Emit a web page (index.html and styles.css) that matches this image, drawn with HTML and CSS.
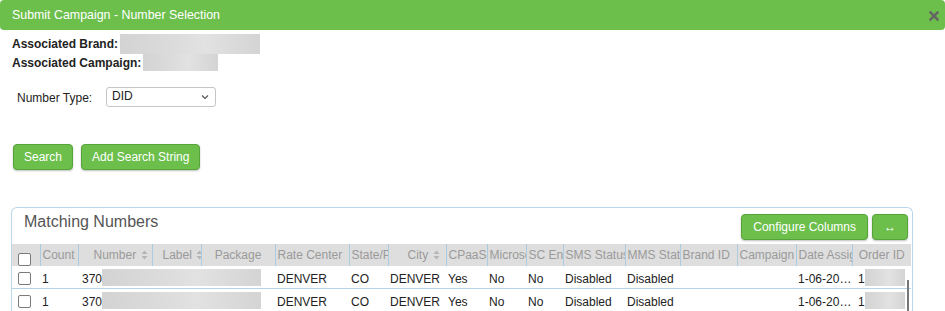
FILE: index.html
```html
<!DOCTYPE html>
<html>
<head>
<meta charset="utf-8">
<link rel="stylesheet" href="styles.css">
</head>
<body>
<div class="titlebar">
  <span class="title">Submit Campaign - Number Selection</span>
  <svg class="close" width="10" height="10" viewBox="0 0 10 10"><path d="M1.5 1.5 L8.5 8.5 M8.5 1.5 L1.5 8.5" stroke="#666" stroke-width="2.6" stroke-linecap="square"/></svg>
</div>
<div class="info">
  <div class="info-row"><b>Associated Brand:</b><span class="blur brand"></span></div>
  <div class="info-row"><b>Associated Campaign:</b><span class="blur camp"></span></div>
</div>
<div class="type-row">
  <span class="type-label">Number Type:</span>
  <div class="select"><span>DID</span><svg width="8" height="6" viewBox="0 0 8 6"><path d="M1 1.5 L4 4.5 L7 1.5" fill="none" stroke="#555" stroke-width="1.2"/></svg></div>
</div>
<div class="actions">
  <button class="btn">Search</button>
  <button class="btn">Add Search String</button>
</div>
<div class="panel">
  <div class="panel-head">
    <span class="panel-title">Matching Numbers</span>
    <div class="panel-tools">
      <button class="btn cfg">Configure Columns</button>
      <button class="btn arrow">&#8596;</button>
    </div>
  </div>
  <table class="grid">
    <colgroup>
      <col style="width:28px"><col style="width:38px"><col style="width:74px"><col style="width:49px"><col style="width:74px"><col style="width:74px"><col style="width:39px"><col style="width:58px"><col style="width:41px"><col style="width:39px"><col style="width:37px"><col style="width:62px"><col style="width:55px"><col style="width:57px"><col style="width:59px"><col style="width:56px"><col style="width:59px">
    </colgroup>
    <thead>
      <tr>
        <th class="chk"><span class="box"></span></th>
        <th>Count</th>
        <th class="num">Number <svg class="sort" width="7" height="10" viewBox="0 0 7 10"><path d="M3.5 0.5 L6.5 4 L0.5 4 Z M3.5 9.5 L6.5 6 L0.5 6 Z" fill="#b5b5b5"/></svg></th>
        <th class="lbl">Label <svg class="sort" width="7" height="10" viewBox="0 0 7 10"><path d="M3.5 0.5 L6.5 4 L0.5 4 Z M3.5 9.5 L6.5 6 L0.5 6 Z" fill="#b5b5b5"/></svg></th>
        <th class="c">Package</th>
        <th>Rate Center</th>
        <th>State/Province</th>
        <th class="city">City <svg class="sort" width="7" height="10" viewBox="0 0 7 10"><path d="M3.5 0.5 L6.5 4 L0.5 4 Z M3.5 9.5 L6.5 6 L0.5 6 Z" fill="#b5b5b5"/></svg></th>
        <th>CPaaS</th>
        <th>Microsoft</th>
        <th>SC Enabled</th>
        <th>SMS Status</th>
        <th>MMS Status</th>
        <th>Brand ID</th>
        <th>Campaign ID</th>
        <th>Date Assigned</th>
        <th class="c">Order ID</th>
      </tr>
    </thead>
    <tbody>
      <tr>
        <td class="chk"><span class="box"></span></td>
        <td>1</td>
        <td colspan="3" class="numcell"><div class="cellflex"><span>370</span><span class="blur nb"></span></div></td>
        <td>DENVER</td><td>CO</td><td>DENVER</td><td>Yes</td><td>No</td><td>No</td><td>Disabled</td><td>Disabled</td><td></td><td></td><td class="date">1-06-2023</td><td class="oid"><div class="cellflex"><span>1</span><span class="blur ob"></span></div></td>
      </tr>
      <tr>
        <td class="chk"><span class="box"></span></td>
        <td>1</td>
        <td colspan="3" class="numcell"><div class="cellflex"><span>370</span><span class="blur nb"></span></div></td>
        <td>DENVER</td><td>CO</td><td>DENVER</td><td>Yes</td><td>No</td><td>No</td><td>Disabled</td><td>Disabled</td><td></td><td></td><td class="date">1-06-2023</td><td class="oid"><div class="cellflex"><span>1</span><span class="blur ob"></span></div></td>
      </tr>
    </tbody>
  </table>
  <div class="scroll-thumb"></div>
</div>
</body>
</html>
```
FILE: styles.css
```css
* { box-sizing: border-box; }
html, body { margin: 0; padding: 0; background: #fff; }
body { font-family: "Liberation Sans", Arial, sans-serif; font-size: 12px; color: #222; overflow: hidden; }

.titlebar {
  height: 30px;
  background: #6dbf4c;
  border-radius: 4px;
  display: flex;
  align-items: center;
  justify-content: space-between;
  padding: 0 6px 0 12px;
}
.title { color: #fff; font-size: 12.4px; }
.close { margin-top: 1px; }

.info { padding: 4px 12px 0; }
.info-row { display: flex; align-items: center; height: 19px; }
.info-row b { font-weight: bold; color: #222; }
.blur {
  display: inline-block;
  background: linear-gradient(90deg, #d3d3d3 0%, #dcdcdc 40%, #e2e2e2 60%, #d4d4d4 100%);
}
.brand { width: 140px; height: 20px; margin-left: 2px; }
.camp { width: 75px; height: 17px; margin-left: 2px; }

.type-row { display: flex; align-items: center; padding: 16px 0 0 17px; }
.type-label { width: 89px; }
.select {
  width: 110px; height: 20px;
  border: 1px solid #c5c5c5; border-radius: 3px;
  display: flex; align-items: center; justify-content: space-between;
  padding: 0 6px 0 5px;
  margin-top: -1px;
}
.select span { margin-top: -3px; }

.actions { display: flex; gap: 8px; padding: 37px 0 0 13px; }
.btn {
  font-family: "Liberation Sans", Arial, sans-serif;
  font-size: 12px;
  color: #fff;
  background: #6cbf4b;
  border: 1px solid #56a33a;
  border-radius: 4px;
  height: 26px;
  padding: 0 10px;
  box-shadow: 0 1px 2px rgba(0,0,0,0.25);
  cursor: pointer;
}
.cfg { padding: 0 11px; }
.arrow { width: 36px; padding: 0; font-size: 12px; font-weight: bold; }

.panel {
  position: relative;
  margin: 37px 0 0 11px;
  width: 902px;
  height: 104px;
  border: 1px solid #b9d6ea;
  border-bottom: none;
  border-radius: 6px 6px 0 0;
  overflow: hidden;
}
.panel-head {
  height: 36px;
  display: flex;
  justify-content: space-between;
  align-items: flex-start;
  padding: 6px 4px 0 12px;
}
.panel-title { font-size: 16px; color: #555; margin-top: -1px; }
.panel-tools { display: flex; gap: 4px; }

.grid { table-layout: fixed; border-collapse: collapse; width: 899px; }
.grid th, .grid td { box-sizing: content-box; }
.grid th {
  height: 22px;
  background: #dedede;
  color: #9a9a9a;
  font-weight: normal;
  text-align: left;
  white-space: nowrap;
  overflow: hidden;
  padding: 0 2px;
  border-left: 1px solid #aacbe2;
  font-size: 12px;
}
.grid th:first-child { border-left: none; }
.grid th.c { text-align: center; }
.grid th.num { padding-left: 15px; }
.grid th.lbl { padding-left: 10px; }
.grid th.city { padding-left: 19px; }
.sort { vertical-align: -1px; margin-left: 1px; }
.grid td {
  height: 19px;
  padding: 3px 2px 0;
  white-space: nowrap;
  overflow: hidden;
  text-overflow: ellipsis;
  border-bottom: 1px solid #b4d3ea;
}
.grid tbody tr:last-child td { border-bottom: none; }
.grid th.chk { padding: 0 0 0 6px; text-align: left; vertical-align: bottom; }
.grid td.chk { padding: 0 0 0 6px; height: 22px; text-align: left; }
.box {
  display: inline-block; width: 13px; height: 13px;
  border: 1px solid #7a7a7a; border-radius: 2px; background: #fff;
  vertical-align: middle;
}
.grid td.chk .box { margin-top: 2px; }
.cellflex { display: flex; align-items: center; height: 19px; overflow: hidden; }
.grid td.numcell { padding-left: 4px; }
.nb { flex: none; width: 159px; height: 17px; margin-top: -2px; }
.ob { flex: none; width: 40px; height: 17px; margin-top: -2px; }
.grid td.date { padding-right: 0; }
.grid td.oid { padding-left: 6px; }

.scroll-thumb {
  position: absolute;
  right: 3px; top: 72px;
  width: 2px; height: 40px;
  background: #777;
}
```
